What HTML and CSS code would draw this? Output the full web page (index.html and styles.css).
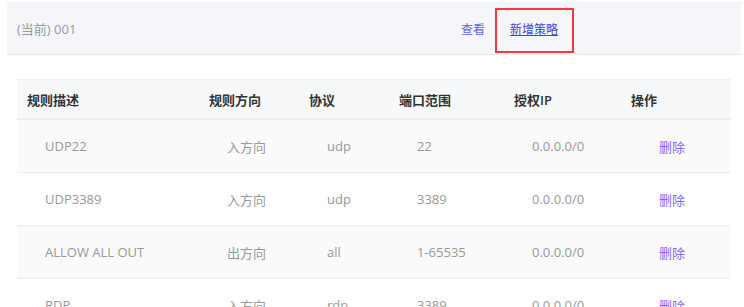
FILE: index.html
```html
<!DOCTYPE html>
<html lang="zh">
<head>
<meta charset="utf-8">
<link rel="stylesheet" href="styles.css">
</head>
<body>
<div class="bar">
  <div class="current">(当前) 001</div>
  <a class="view">查看</a>
  <div class="add-box"><a class="add">新增策略</a></div>
</div>
<table class="rules">
  <colgroup>
    <col class="c1"><col class="c2"><col class="c3"><col class="c4"><col class="c5"><col class="c6">
  </colgroup>
  <thead>
    <tr><th>规则描述</th><th>规则方向</th><th>协议</th><th>端口范围</th><th>授权IP</th><th>操作</th></tr>
  </thead>
  <tbody>
    <tr class="odd"><td>UDP22</td><td>入方向</td><td>udp</td><td>22</td><td>0.0.0.0/0</td><td class="op"><a>删除</a></td></tr>
    <tr><td>UDP3389</td><td>入方向</td><td>udp</td><td>3389</td><td>0.0.0.0/0</td><td class="op"><a>删除</a></td></tr>
    <tr class="odd"><td>ALLOW ALL OUT</td><td>出方向</td><td>all</td><td>1-65535</td><td>0.0.0.0/0</td><td class="op"><a>删除</a></td></tr>
    <tr><td>RDP</td><td>入方向</td><td>rdp</td><td>3389</td><td>0.0.0.0/0</td><td class="op"><a>删除</a></td></tr>
  </tbody>
</table>
</body>
</html>
```
FILE: styles.css
```css
html, body {
  margin: 0;
  padding: 0;
  background: #fff;
  font-family: "Open Sans", "Noto Sans CJK SC", sans-serif;
  font-size: 13px;
  overflow: hidden;
}
.bar {
  margin: 2px 0 0 7px;
  width: 734px;
  height: 53px;
  box-sizing: border-box;
  background: #f5f6fa;
  border-top: 1px solid #eef0f3;
  border-bottom: 1px solid #e6e8ec;
  display: flex;
  align-items: center;
  padding-left: 10px;
}
.current {
  flex: 0 0 444px;
  color: #999;
  font-size: 13px;
}
.view {
  color: #5f63ff;
  font-size: 12px;
  cursor: pointer;
}
.add-box {
  align-self: flex-start;
  margin-left: 10px;
  margin-top: 5px;
  height: 45px;
  box-sizing: border-box;
  border: 2px solid #f5383b;
  display: flex;
  align-items: center;
  padding: 0 14px 0 13px;
}
.add {
  color: #3d46d6;
  font-size: 12px;
  text-decoration: underline;
  margin-top: -3px;
}
.rules {
  margin: 24px 0 0 17px;
  width: 714px;
  table-layout: fixed;
  border-collapse: collapse;
}
.c1 { width: 182px; }
.c2 { width: 100px; }
.c3 { width: 90px; }
.c4 { width: 115px; }
.c5 { width: 117px; }
.c6 { width: 110px; }
.rules th {
  height: 38px;
  background: #f7f8fa;
  border-top: 1px solid #eef0f3;
  border-bottom: 2px solid #eceef3;
  text-align: left;
  padding: 0 0 0 10px;
  color: #333;
  font-weight: 600;
  font-size: 13px;
}
.rules td {
  height: 52px;
  border-bottom: 1px solid #eeeeee;
  padding: 0 0 0 28px;
  color: #999;
  font-size: 13px;
  white-space: nowrap;
}
.rules tr.odd td { background: #fafafa; }
.rules td.op { padding-left: 38px; }
.op a {
  color: #7a6cff;
  cursor: pointer;
}
```
